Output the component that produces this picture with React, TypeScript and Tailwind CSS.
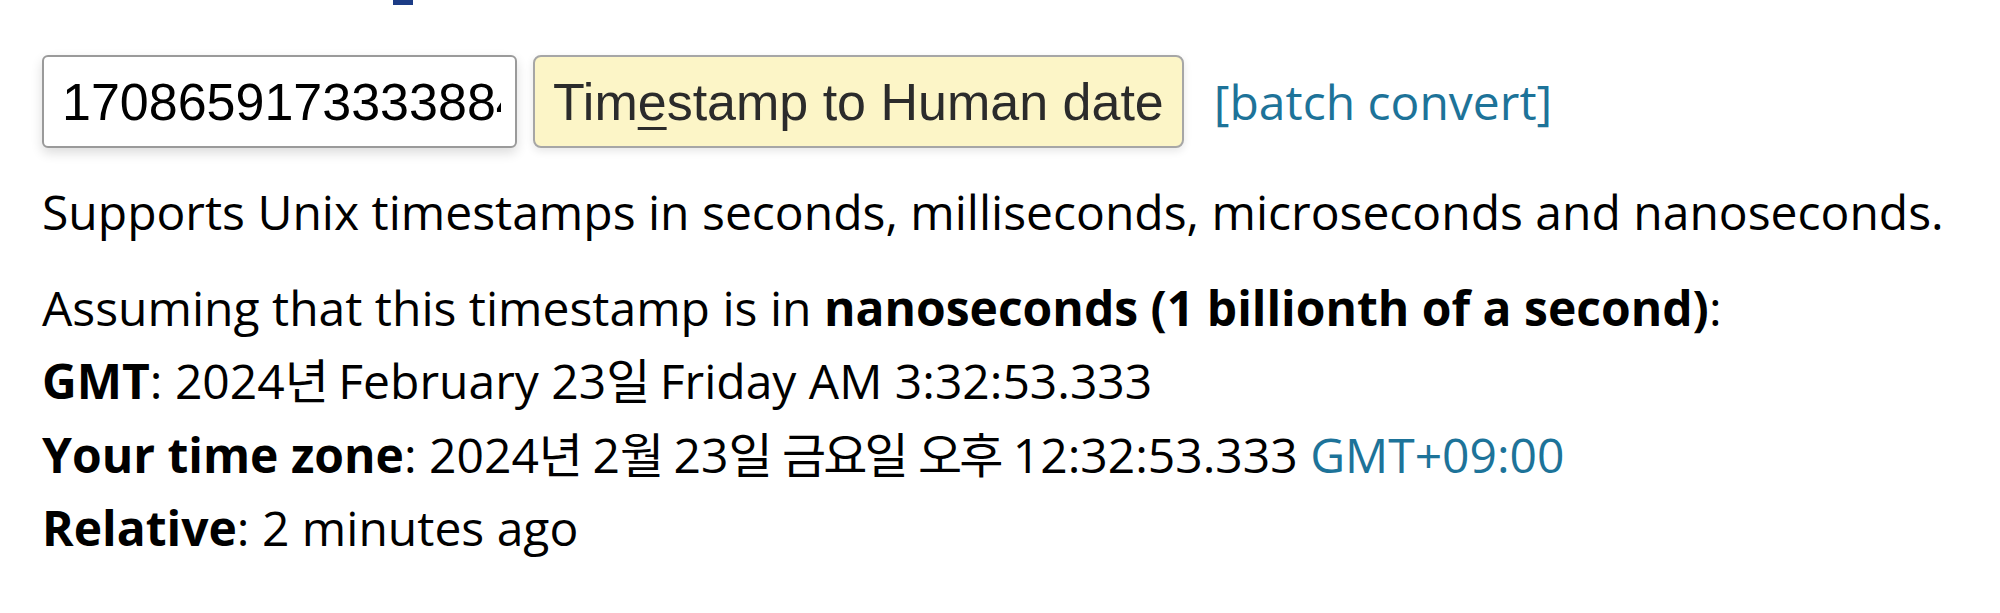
import React from 'react'

const font = "font-['Open_Sans','Noto_Sans_CJK_KR',sans-serif] text-[48px] leading-[73.5px]"

// Korean glyphs render a little narrower in the reference than Noto CJK does
function Ko({ children }: { children: React.ReactNode }) {
  return <span className="tracking-[-3px]">{children}</span>
}

function ConvertForm() {
  return (
    <div className="mt-[50px] flex h-[93px] items-center">
      <input
        type="text"
        defaultValue="1708659173333884000"
        className="h-[93px] w-[475px] rounded-[6px] border-2 border-[#9a9a9a] bg-white pl-[18px] pr-[14px] font-['Liberation_Sans',Arial,sans-serif] text-[52px] text-black shadow-[0_5px_12px_rgba(0,0,0,0.14)] outline-none"
      />
      <button className="ml-[16px] h-[93px] rounded-[8px] border-2 border-[#a6a6a6] bg-[#fcf5c7] px-[18px] font-['Liberation_Sans',Arial,sans-serif] text-[52px] leading-none text-[#2b2b2b] shadow-[0_3px_8px_rgba(0,0,0,0.1)]">
        Tim<u className="underline decoration-[3px] underline-offset-[7px]">e</u>stamp to Human date
      </button>
      <a href="#" className={`ml-[30px] ${font} text-[#1d7399]`}>
        [batch convert]
      </a>
    </div>
  )
}

export default function App() {
  return (
    <div className="h-[613px] w-[2000px] overflow-hidden bg-white pl-[42px]">
      <div className="ml-[351px] h-[5px] w-[20px] bg-[#1c3c86]" />
      <ConvertForm />
      <div className={`mt-[27px] ${font} text-black`}>
        <p>Supports Unix timestamps in seconds, milliseconds, microseconds and nanoseconds.</p>
        <div className="mt-[22px]">
          <div>
            Assuming that this timestamp is in <b>nanoseconds (1 billionth of a second)</b>:
          </div>
          <div>
            <b>GMT</b>: 2024<Ko>년</Ko> February 23<Ko>일</Ko> Friday AM 3:32:53.333
          </div>
          <div>
            <b>Your time zone</b>: 2024<Ko>년</Ko> 2<Ko>월</Ko> 23<Ko>일</Ko> <Ko>금요일</Ko> <Ko>오후</Ko>{' '}
            12:32:53.333{' '}
            <a href="#" className="text-[#1d7399]">
              GMT+09:00
            </a>
          </div>
          <div>
            <b>Relative</b>: 2 minutes ago
          </div>
        </div>
      </div>
    </div>
  )
}
